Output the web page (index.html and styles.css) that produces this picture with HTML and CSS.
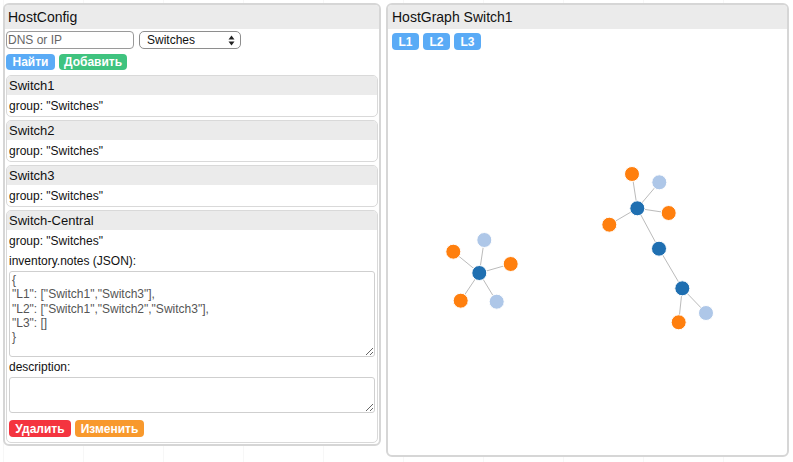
FILE: index.html
```html
<!DOCTYPE html>
<html>
<head>
<meta charset="utf-8">
<link rel="stylesheet" href="styles.css">
</head>
<body>
<div class="panel panel-config">
  <div class="panel-title">HostConfig</div>
  <div class="controls">
    <input class="search" type="text" placeholder="DNS or IP">
    <div class="select-wrap">
      <select class="group-select"><option>Switches</option></select>
      <svg class="select-arrows" width="7" height="11" viewBox="0 0 7 11"><path d="M3.5 0.5 L6.5 4.5 L0.5 4.5 Z M3.5 10.5 L6.5 6.5 L0.5 6.5 Z" fill="#222"/></svg>
    </div>
  </div>
  <div class="btn-row">
    <button class="btn btn-blue btn-find">Найти</button>
    <button class="btn btn-green btn-add">Добавить</button>
  </div>
  <div class="card">
    <div class="card-head">Switch1</div>
    <div class="card-body"><div class="line">group: "Switches"</div></div>
  </div>
  <div class="card">
    <div class="card-head">Switch2</div>
    <div class="card-body"><div class="line">group: "Switches"</div></div>
  </div>
  <div class="card">
    <div class="card-head">Switch3</div>
    <div class="card-body"><div class="line">group: "Switches"</div></div>
  </div>
  <div class="card card-open">
    <div class="card-head">Switch-Central</div>
    <div class="card-body">
      <div class="line">group: "Switches"</div>
      <div class="label">inventory.notes (JSON):</div>
      <textarea class="ta ta-notes">{
"L1": ["Switch1","Switch3"],
"L2": ["Switch1","Switch2","Switch3"],
"L3": []
}</textarea>
      <div class="label">description:</div>
      <textarea class="ta ta-desc"></textarea>
      <div class="btn-row btn-row-actions">
        <button class="btn btn-red btn-del">Удалить</button>
        <button class="btn btn-orange btn-edit">Изменить</button>
      </div>
    </div>
  </div>
</div>
<div class="panel panel-graph">
  <div class="panel-title">HostGraph Switch1</div>
  <div class="level-row">
    <button class="btn btn-blue btn-level">L1</button>
    <button class="btn btn-blue btn-level">L2</button>
    <button class="btn btn-blue btn-level">L3</button>
  </div>
  <svg class="graph" viewBox="388 52 399 403" preserveAspectRatio="xMinYMin meet">
    <g class="links" stroke="#bbb" stroke-width="1">
      <line x1="479.3" y1="273" x2="484.3" y2="240"/>
      <line x1="479.3" y1="273" x2="453.3" y2="251.7"/>
      <line x1="479.3" y1="273" x2="510.7" y2="264"/>
      <line x1="479.3" y1="273" x2="460.7" y2="300.7"/>
      <line x1="479.3" y1="273" x2="496.7" y2="301.7"/>
      <line x1="637.3" y1="208.3" x2="632" y2="174"/>
      <line x1="637.3" y1="208.3" x2="659.3" y2="182.3"/>
      <line x1="637.3" y1="208.3" x2="668.7" y2="213"/>
      <line x1="637.3" y1="208.3" x2="609.3" y2="224.7"/>
      <line x1="637.3" y1="208.3" x2="659" y2="248.7"/>
      <line x1="659" y1="248.7" x2="682.3" y2="288.3"/>
      <line x1="682.3" y1="288.3" x2="678.7" y2="322.3"/>
      <line x1="682.3" y1="288.3" x2="706" y2="313"/>
    </g>
    <g class="nodes" stroke="#fff" stroke-width="1">
      <circle cx="484.3" cy="240" r="7.5" fill="#aec7e8"/>
      <circle cx="453.3" cy="251.7" r="7.5" fill="#ff7f0e"/>
      <circle cx="510.7" cy="264" r="7.5" fill="#ff7f0e"/>
      <circle cx="460.7" cy="300.7" r="7.5" fill="#ff7f0e"/>
      <circle cx="496.7" cy="301.7" r="7.5" fill="#aec7e8"/>
      <circle cx="479.3" cy="273" r="7.5" fill="#1f6fb1"/>
      <circle cx="632" cy="174" r="7.5" fill="#ff7f0e"/>
      <circle cx="659.3" cy="182.3" r="7.5" fill="#aec7e8"/>
      <circle cx="668.7" cy="213" r="7.5" fill="#ff7f0e"/>
      <circle cx="609.3" cy="224.7" r="7.5" fill="#ff7f0e"/>
      <circle cx="637.3" cy="208.3" r="7.5" fill="#1f6fb1"/>
      <circle cx="659" cy="248.7" r="7.5" fill="#1f6fb1"/>
      <circle cx="682.3" cy="288.3" r="7.5" fill="#1f6fb1"/>
      <circle cx="678.7" cy="322.3" r="7.5" fill="#ff7f0e"/>
      <circle cx="706" cy="313" r="7.5" fill="#aec7e8"/>
    </g>
  </svg>
</div>
</body>
</html>
```

FILE: styles.css
```css
html, body {
  margin: 0;
  padding: 0;
}
body {
  width: 793px;
  height: 462px;
  box-sizing: border-box;
  padding: 3px 0 0 3px;
  display: flex;
  align-items: flex-start;
  gap: 5px;
  font-family: "Liberation Sans", Arial, Helvetica, sans-serif;
  font-size: 12px;
  color: #111;
  background-color: #fff;
  background-image: repeating-linear-gradient(90deg, #f7f7f7 0 1px, transparent 1px 80px);
  background-position: 3px 0;
  overflow: hidden;
}
.panel {
  box-sizing: border-box;
  border: 2px solid #d6d6d6;
  border-radius: 6px;
  background: #fff;
  display: flex;
  flex-direction: column;
}
.panel-config {
  width: 378px;
  height: 443px;
}
.panel-graph {
  width: 403px;
  height: 454px;
}
.panel-title {
  height: 24px;
  line-height: 24px;
  font-size: 14px;
  padding-left: 3px;
  background: #ebebeb;
  border-radius: 4px 4px 0 0;
}
.panel-graph .panel-title {
  padding-left: 4px;
}
.controls {
  display: flex;
  gap: 5px;
  margin: 2px 0 0 1px;
  height: 18px;
}
.search {
  box-sizing: border-box;
  width: 128px;
  height: 18px;
  margin: 0;
  padding: 0 1px;
  border: 1px solid #9a9a9a;
  border-radius: 4px;
  font-family: "Liberation Sans", Arial, sans-serif;
  font-size: 12px;
  color: #222;
  outline: none;
}
.search::placeholder {
  color: #666;
}
.select-wrap {
  position: relative;
  width: 102px;
  height: 18px;
}
.group-select {
  -webkit-appearance: none;
  appearance: none;
  box-sizing: border-box;
  width: 102px;
  height: 18px;
  margin: 0;
  padding: 0 0 0 7px;
  border: 1px solid #8e8e8e;
  border-radius: 5px;
  background: #fff;
  font-family: "Liberation Sans", Arial, sans-serif;
  font-size: 12px;
  line-height: 16px;
  color: #111;
}
.select-arrows {
  position: absolute;
  right: 6px;
  top: 4px;
}
.btn-row {
  display: flex;
  gap: 4px;
  margin: 5px 0 0 1px;
}
.btn {
  box-sizing: border-box;
  height: 16px;
  margin: 0;
  border: none;
  border-radius: 4px;
  padding: 0;
  color: #fff;
  font-family: "Liberation Sans", Arial, sans-serif;
  font-weight: bold;
  font-size: 12px;
  line-height: 16px;
  text-align: center;
}
.btn-blue { background: #5aabf6; }
.btn-green { background: #3fc37f; }
.btn-red { background: #f4343f; }
.btn-orange { background: #f8992d; }
.btn-find { width: 49px; }
.btn-add { width: 68px; }
.btn-del { width: 62px; height: 17px; }
.btn-edit { width: 69px; height: 17px; }
.btn-level { width: 27px; height: 17px; }
.level-row {
  display: flex;
  gap: 4px;
  margin: 4px 0 0 4px;
}
.card {
  box-sizing: border-box;
  margin: 5px 1px 0 1px;
  border: 1px solid #d9d9d9;
  border-radius: 5px;
  background: #fff;
}
.card + .card {
  margin-top: 3px;
}
.card-head {
  height: 19px;
  line-height: 19px;
  font-size: 13px;
  padding-left: 2px;
  background: #ebebeb;
  border-radius: 4px 4px 0 0;
}
.card-body {
  padding: 0 2px;
}
.line {
  line-height: 21px;
  padding-top: 1px;
  margin-bottom: -1px;
}
.label {
  line-height: 20px;
}
.card-open .card-body {
  padding-bottom: 5px;
}
.ta {
  display: block;
  box-sizing: border-box;
  width: 366px;
  margin: 0;
  padding: 1px 2px;
  border: 1px solid #cfcfcf;
  border-radius: 3px;
  font-family: "Liberation Sans", Arial, sans-serif;
  font-size: 12px;
  line-height: 14.3px;
  color: #555;
  resize: vertical;
  outline: none;
}
.ta-notes { height: 86px; }
.ta-desc { height: 36px; }
.btn-row-actions {
  margin: 7px 0 0 0;
}
.graph {
  display: block;
  width: 399px;
  height: 403px;
  margin-top: 2px;
}
```
